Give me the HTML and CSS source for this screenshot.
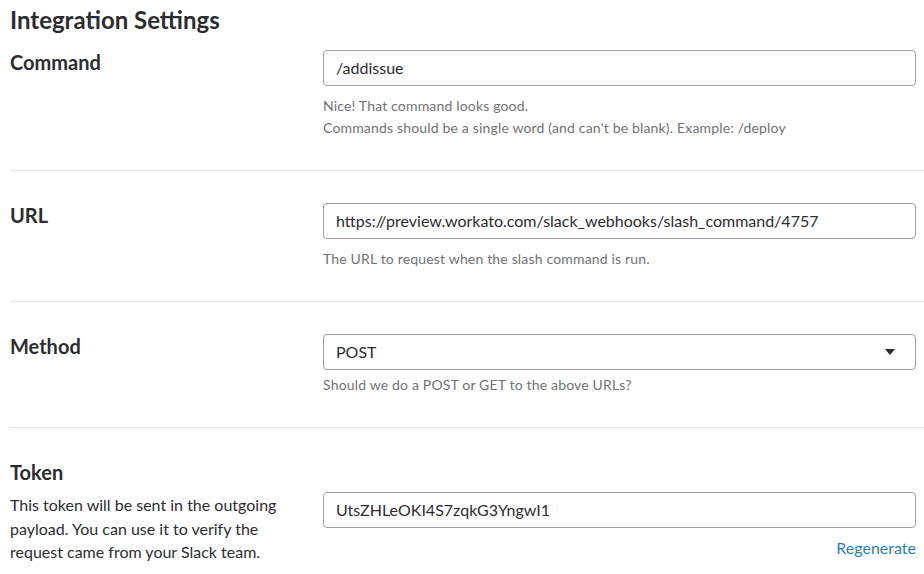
FILE: index.html
```html
<!DOCTYPE html>
<html>
<head>
<meta charset="utf-8">
<link rel="stylesheet" href="styles.css">
</head>
<body>
<div class="page">
  <h1 class="title">Integration Settings</h1>

  <section class="row">
    <div class="label-col"><h2 class="label">Command</h2></div>
    <div class="field-col">
      <div class="input">/addissue</div>
      <div class="help">
        <p>Nice! That command looks good.</p>
        <p>Commands should be a single word (and can't be blank). Example: /deploy</p>
      </div>
    </div>
  </section>

  <section class="row">
    <div class="label-col"><h2 class="label">URL</h2></div>
    <div class="field-col">
      <div class="input">https://preview.workato.com/slack_webhooks/slash_command/4757</div>
      <div class="help"><p>The URL to request when the slash command is run.</p></div>
    </div>
  </section>

  <section class="row">
    <div class="label-col"><h2 class="label">Method</h2></div>
    <div class="field-col">
      <div class="input select">
        <span>POST</span>
        <svg class="caret" width="10" height="6" viewBox="0 0 10 6"><path d="M0 0H10L5 6Z" fill="#2c2d30"/></svg>
      </div>
      <div class="help tight"><p>Should we do a POST or GET to the above URLs?</p></div>
    </div>
  </section>

  <section class="row token">
    <h2 class="label">Token</h2>
    <div class="token-grid">
      <p class="desc">This token will be sent in the outgoing payload. You can use it to verify the request came from your Slack team.</p>
      <div class="field-col">
        <div class="input">UtsZHLeOKI4S7zqkG3YngwI1</div>
        <div class="regen"><a href="#">Regenerate</a></div>
      </div>
    </div>
  </section>
</div>
</body>
</html>
```

FILE: styles.css
```css
* { box-sizing: border-box; }
html, body {
  margin: 0;
  padding: 0;
  background: #ffffff;
  font-family: Lato, "Open Sans", sans-serif;
  color: #2c2d30;
}
p { margin: 0; }
.page {
  padding: 5px 0 0 10px;
}
.title {
  margin: 0 0 16px 0;
  font-size: 24px;
  line-height: 29px;
  font-weight: 700;
}
.row {
  display: grid;
  grid-template-columns: 313px 1fr;
  padding: 0 8px 31px 0;
  border-bottom: 1px solid #e8e8e8;
}
.row + .row {
  padding-top: 32px;
}
.row.first-row {
  padding-bottom: 32px;
}
.label {
  margin: 0;
  font-size: 20px;
  line-height: 24px;
  font-weight: 700;
}
.input {
  height: 36px;
  border: 1px solid #a0a0a2;
  border-radius: 4px;
  padding: 0 12px;
  font-size: 16px;
  line-height: 34px;
  color: #2c2d30;
  white-space: nowrap;
}
.select {
  display: flex;
  align-items: center;
  justify-content: space-between;
  padding-right: 20px;
}
.caret { display: block; }
.help {
  margin-top: 9px;
  font-size: 14px;
  letter-spacing: 0.17px;
  line-height: 22px;
  color: #717274;
}
.help.tight { margin-top: 4px; }
.token {
  display: block;
  border-bottom: none;
  padding-bottom: 0;
}
.token-grid {
  display: grid;
  grid-template-columns: 313px 1fr;
  margin-top: 8px;
}
.desc {
  font-size: 16px;
  line-height: 23.5px;
  padding-top: 1px;
  padding-right: 24px;
  color: #2c2d30;
}
.regen {
  text-align: right;
  margin-top: 9px;
  font-size: 16px;
  line-height: 22px;
}
.regen a {
  color: #2a80b9;
  text-decoration: none;
}
```
